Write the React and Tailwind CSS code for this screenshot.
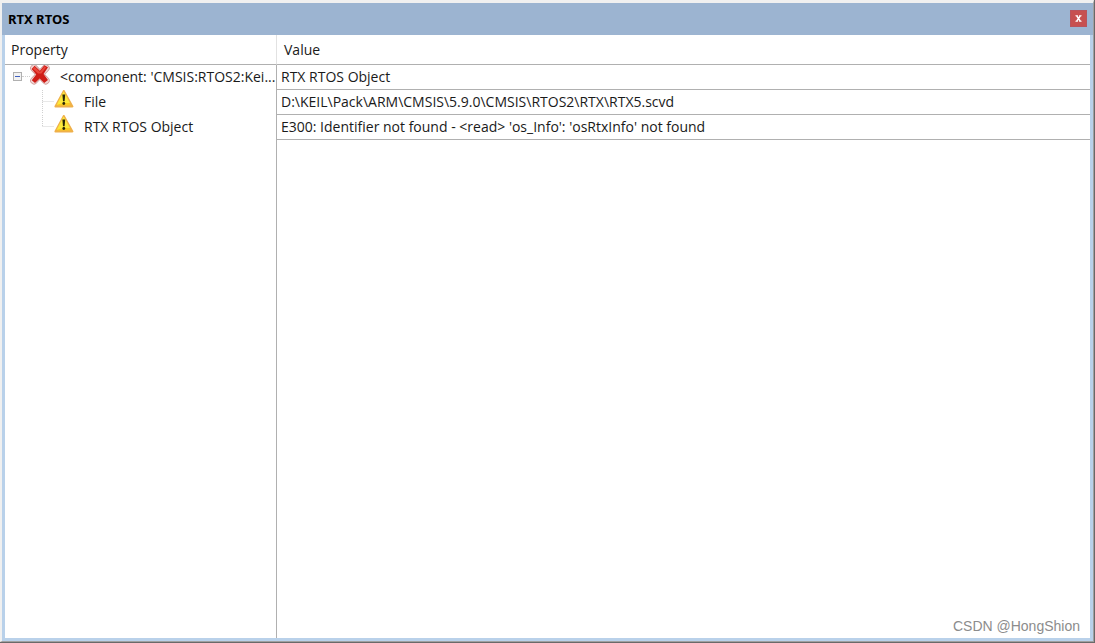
import React, { useState } from 'react';

const items = [
  { name: 'File', value: 'D:\\KEIL\\Pack\\ARM\\CMSIS\\5.9.0\\CMSIS\\RTOS2\\RTX\\RTX5.scvd' },
  { name: 'RTX RTOS Object', value: "E300: Identifier not found - <read> 'os_Info': 'osRtxInfo' not found" },
];

function ErrorIcon() {
  return (
    <svg className="w-5 h-5 shrink-0 self-start" viewBox="0 0 20 20" aria-hidden="true">
      <path d="M4 3.2L15.8 15.6M15.8 3.2L4 15.6" stroke="#cf9a98" strokeWidth="7.6" strokeLinecap="round" />
      <path d="M4 3.2L15.8 15.6M15.8 3.2L4 15.6" stroke="#f1d6d4" strokeWidth="6" strokeLinecap="round" />
      <path d="M4.6 0.8L9.9 5.8L14.4 0.2L18 2.2L13.6 9L18 15L14.2 18L9.7 13.4L5 18L1.8 15.2L6.2 9.4L1.6 4Z" fill="#cf1d17" />
      <path d="M4.6 1.8L9.9 7L14.6 1.2L16.2 2.2L11.4 8.6L8 8.6L2.8 3.8Z" fill="#e8463a" />
    </svg>
  );
}

function WarningIcon() {
  return (
    <svg className="w-5 h-5 shrink-0 self-start" viewBox="0 0 20 20" aria-hidden="true">
      <path d="M9.8 1L18.4 16.4H1.4Z" fill="#fbcb1e" stroke="#efb04a" strokeWidth="2" strokeLinejoin="round" />
      <path d="M9.6 1.6L16 13C11 13 6 13.5 2.6 15Z" fill="#fde93a" />
      <path d="M8.4 4.4H11.2L10.6 11.2H9Z" fill="#2a2605" />
      <circle cx="9.8" cy="13.5" r="1.4" fill="#2a2605" />
    </svg>
  );
}

// Dotted connector between a parent and its child rows
function Branch({ last }) {
  return (
    <svg className="w-3 h-6 shrink-0" viewBox="0 0 12 24" aria-hidden="true">
      <path
        d={last ? 'M0.5 0V11M0.5 11.5H12' : 'M0.5 0V24M0.5 11.5H12'}
        fill="none"
        stroke="#d0d0d0"
        strokeDasharray="1 1"
      />
    </svg>
  );
}

export default function App() {
  const [visible, setVisible] = useState(true);
  const [expanded, setExpanded] = useState(true);

  if (!visible) return null;

  return (
    <div className="min-h-screen flex flex-col border-r border-b border-[#696969] font-['Open_Sans',sans-serif] text-sm text-[#1a1a1a]">
      <div className="grow flex flex-col bg-[#b9d1ea] border-t-3 border-l-2 border-r border-b border-t-[#f0f0f0] border-l-[#f0f0f0] border-r-[#a0a0a0] border-b-[#a0a0a0]">
        <header className="h-8 shrink-0 flex items-center justify-between bg-[#9cb4d1] px-1.5">
          <h1 className="font-['Noto_Sans',sans-serif] text-[13px] font-bold text-black pt-px">RTX RTOS</h1>
          <button
            type="button"
            aria-label="Close"
            onClick={() => setVisible(false)}
            className="w-[17px] h-[17px] mb-0.5 flex items-center justify-center bg-[#c75050] border border-[#b9535c]"
          >
            <svg className="w-[7px] h-[7px]" viewBox="0 0 8 8" aria-hidden="true">
              <path d="M0.5 0.8H3.2M4.8 0.8H7.5M0.5 7.2H3.2M4.8 7.2H7.5" stroke="#fff" strokeWidth="1.2" />
              <path d="M2 1L6 7M6 1L2 7" stroke="#fff" strokeWidth="1.8" />
            </svg>
          </button>
        </header>

        <main className="grow flex flex-col bg-white ml-[3px] mr-[3px] mb-[3px]">
          <table className="w-full table-fixed border-separate border-spacing-0">
            <thead>
              <tr className="h-[30px]">
                <th className="w-[272px] p-0 pl-1.5 text-left font-normal border-r border-r-[#e2e2e2] border-b border-b-[#b0b0b0]">Property</th>
                <th className="p-0 pl-[7px] text-left font-normal border-b border-[#b0b0b0]">Value</th>
              </tr>
            </thead>
            <tbody>
              <tr className="h-[25px]">
                <td className="p-0 align-top border-r border-[#b0b0b0]">
                  <div className="flex items-center h-6 pl-2">
                    <button
                      type="button"
                      aria-label="Toggle component"
                      aria-expanded={expanded}
                      onClick={() => setExpanded(!expanded)}
                      className="w-[9px] h-[9px] mb-0.5 shrink-0 flex items-center justify-center border border-[#b0b0b0] bg-[#f2f2f2]"
                    >
                      <svg className="w-[5px] h-[5px]" viewBox="0 0 5 5" aria-hidden="true">
                        <path d={expanded ? 'M0 2.5H5' : 'M0 2.5H5M2.5 0V5'} stroke="#3f5fbf" />
                      </svg>
                    </button>
                    <span className="w-2 mb-0.5 shrink-0 border-t border-dotted border-[#d0d0d0]" />
                    <ErrorIcon />
                    <span className="pl-2.5 whitespace-nowrap">&lt;component: 'CMSIS:RTOS2:Kei...</span>
                  </div>
                </td>
                <td className="p-0 pl-1 border-b border-[#b0b0b0]">RTX RTOS Object</td>
              </tr>
              {expanded && items.map((item, i) => (
                <tr key={item.name} className="h-[25px]">
                  <td className="p-0 align-top border-r border-[#b0b0b0]">
                    <div className="flex items-center h-6 pl-[37px]">
                      <Branch last={i === items.length - 1} />
                      <WarningIcon />
                      <span className="pl-2.5">{item.name}</span>
                    </div>
                  </td>
                  <td className="p-0 pl-1 border-b border-[#b0b0b0]">{item.value}</td>
                </tr>
              ))}
            </tbody>
          </table>

          <div className="grow flex">
            <div className="w-[272px] border-r border-[#b0b0b0]" />
            <div className="grow flex items-end justify-end pr-2.5 pb-0.5">
              <span className="font-['Liberation_Sans',sans-serif] text-[#8c8c8c]">CSDN @HongShion</span>
            </div>
          </div>
        </main>
      </div>
    </div>
  );
}
